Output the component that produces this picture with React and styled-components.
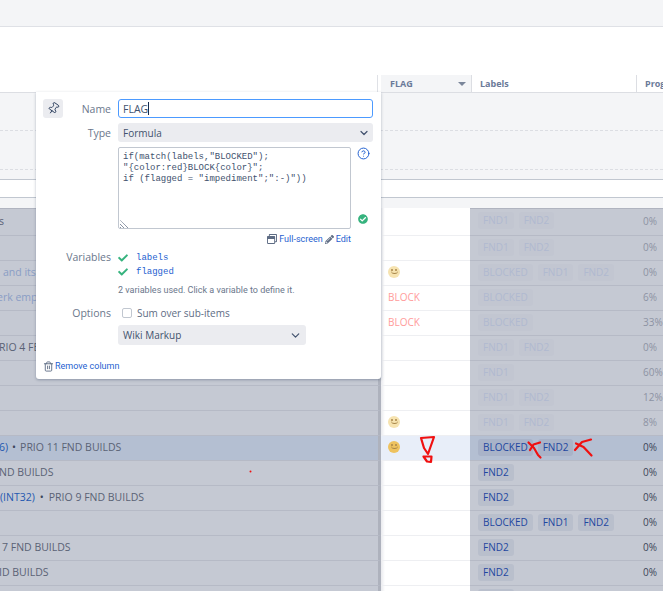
import React from "react";
import styled, { createGlobalStyle, css } from "styled-components";
import { ChevronDown, CircleHelp, Pin, Trash2 } from "lucide-react";
import { FaCheck, FaCheckCircle, FaPencilAlt, FaRegWindowRestore } from "react-icons/fa";

const rows = [
  { text: "s", shift: -1, labels: ["FND1", "FND2"], prog: "0%", faded: true },
  { labels: ["FND1", "FND2"], prog: "0%", faded: true },
  { link: "and its", shift: 3, smile: true, labels: ["BLOCKED", "FND1", "FND2"], prog: "0%", faded: true },
  { link: "erk empl", shift: -3, flag: "BLOCK", labels: ["BLOCKED"], prog: "6%", faded: true },
  { flag: "BLOCK", labels: ["BLOCKED"], prog: "33%", faded: true },
  { text: "RIO 4 FEA", shift: -1, labels: ["FND1", "FND2"], prog: "0%", faded: true },
  { labels: ["FND1"], prog: "60%", faded: true },
  { labels: ["FND1", "FND2"], prog: "12%", faded: true },
  { smile: true, labels: ["FND1", "FND2"], prog: "8%", faded: true },
  { link: "6)", after: "PRIO 11 FND BUILDS", shift: -1, smile: true, active: true, labels: ["BLOCKED", "FND2"], prog: "0%" },
  { text: "ND BUILDS", shift: -1, labels: ["FND2"], prog: "0%" },
  { link: "(INT32)", after: "PRIO 9 FND BUILDS", shift: 0, labels: ["FND2"], prog: "0%" },
  { labels: ["BLOCKED", "FND1", "FND2"], prog: "0%" },
  { text: "7 FND BUILDS", shift: 2, labels: ["FND2"], prog: "0%" },
  { text: "ID BUILDS", shift: -1, labels: ["FND2"], prog: "0%" },
  { labels: ["FND2"], prog: "0%" },
];

const App = () => {
  return (
    <Page>
      <GlobalStyle />
      <TopBar />
      <Gap />
      <HeaderRow>
        <HeaderSpacer />
        <FlagHeader>
          FLAG
          <SortArrow />
        </FlagHeader>
        <LabelsHeader>Labels</LabelsHeader>
        <ProgHeader>Progress</ProgHeader>
      </HeaderRow>
      <Band>
        <BandLine $h={37} />
        <BandLine $h={38} />
        <BandEnd />
      </Band>
      <WhiteStrip />
      <GreyStrip />

      <Grid>
        {rows.map((r, i) => (
          <Row key={i} $first={i === 0}>
            <LeftCell $active={r.active} $first={i === 0} $shift={r.shift || 0}>
              {r.text}
              {r.link && <IssueLink $faded={r.faded}>{r.link}</IssueLink>}
              {r.after && <Dot>•</Dot>}
              {r.after}
            </LeftCell>
            <FlagCell $active={r.active}>
              {r.smile && <Smile $faded={r.faded} />}
              {r.flag && <BlockText>{r.flag}</BlockText>}
            </FlagCell>
            <LabelsCell $active={r.active} $first={i === 0}>
              {r.labels.map((l, j) => (
                <Chip key={j} $faded={r.faded} $active={r.active}>
                  {l}
                </Chip>
              ))}
            </LabelsCell>
            <ProgCell $active={r.active} $first={i === 0} $faded={r.faded}>
              {r.prog}
            </ProgCell>
          </Row>
        ))}
      </Grid>

      <Popup>
        <Field $mb={5}>
          <FieldLabel>
            <PinButton>
              <Pin size={13} strokeWidth={1.6} />
            </PinButton>
            Name
          </FieldLabel>
          <NameInput>
            FLAG
            <Caret />
          </NameInput>
        </Field>
        <Field $mb={5}>
          <FieldLabel>Type</FieldLabel>
          <SelectBox>
            Formula
            <ChevronDown size={12} strokeWidth={2.4} />
          </SelectBox>
        </Field>
        <Field $mb={3}>
          <span />
          <FormulaWrap>
            <Formula>
              {'if(match(labels,"BLOCKED");\n"{color:red}BLOCK{color}";\nif (flagged = "impediment";":-)"))'}
              <ResizeHatch />
            </Formula>
            <SideIcons>
              <CircleHelp size={13} color="#1f5fd0" strokeWidth={1.8} />
              <FaCheckCircle size={10} color="#36b37e" />
            </SideIcons>
          </FormulaWrap>
        </Field>
        <Field $mb={4}>
          <span />
          <EditLinks>
            <FaRegWindowRestore size={10} color="#5e6c84" />
            <TextLink>Full-screen</TextLink>
            <FaPencilAlt size={9} color="#5e6c84" />
            <TextLink>Edit</TextLink>
          </EditLinks>
        </Field>
        <Field>
          <FieldLabel $h={14}>Variables</FieldLabel>
          <VarList>
            <VarRow>
              <FaCheck size={10} color="#36b37e" />
              <VarName>labels</VarName>
            </VarRow>
            <VarRow>
              <FaCheck size={10} color="#36b37e" />
              <VarName>flagged</VarName>
            </VarRow>
          </VarList>
        </Field>
        <Field $mb={6}>
          <span />
          <Hint>2 variables used. Click a variable to define it.</Hint>
        </Field>
        <Field $mb={3}>
          <FieldLabel>Options</FieldLabel>
          <CheckRow>
            <CheckBox />
            Sum over sub-items
          </CheckRow>
        </Field>
        <Field $mb={14}>
          <span />
          <MarkupSelect>
            Wiki Markup
            <ChevronDown size={13} strokeWidth={2.2} />
          </MarkupSelect>
        </Field>
        <RemoveRow>
          <Trash2 size={11} color="#5e6c84" />
          <TextLink>Remove column</TextLink>
        </RemoveRow>
      </Popup>

      <Scribble viewBox="0 0 663 591">
        <g fill="none" stroke="#f01010" strokeWidth="2.2" strokeLinecap="round" strokeLinejoin="round">
          <path d="M421 438 L434 437 L428 454 L424 448 Z" />
          <path d="M423.5 456.5 L431.5 456.5 L431 462 L427 461.5 Z" />
          <path d="M528.5 442.5 L534 448 L538 455 L540.5 457.5" />
          <path d="M540 442.5 L533.5 444.5 L530 450" />
          <path d="M576 443.5 L583.5 447 L591.5 455.5" />
          <path d="M591 439.5 L582 442 L575 450" />
        </g>
        <circle cx="250.5" cy="471.5" r="1" fill="#f01010" />
      </Scribble>
    </Page>
  );
};

export default App;

const GlobalStyle = createGlobalStyle`
  html, body {
    margin: 0;
    padding: 0;
    background: #fff;
    overflow: hidden;
  }
  body {
    font-family: "Open Sans", "Noto Sans", sans-serif;
    font-size: 11px;
  }
`;

const Page = styled.div`
  position: relative;
  width: 663px;
  height: 591px;
  overflow: hidden;
  background: #fff;
`;

const TopBar = styled.div`
  height: 26px;
  background: #f4f5f7;
  border-bottom: 1px solid #dfe1e6;
`;

const Gap = styled.div`
  height: 48px;
`;

const HeaderRow = styled.div`
  display: flex;
  height: 17px;
  border-bottom: 1px solid #dcdee3;
  font-weight: 700;
  font-size: 9px;
  line-height: 17px;
  color: #6b7a99;

  & > * {
    flex-shrink: 0;
  }
`;

const HeaderSpacer = styled.div`
  box-sizing: border-box;
  width: 378px;
  border-right: 1px solid #dfe1e6;
`;

const FlagHeader = styled.div`
  display: flex;
  align-items: center;
  justify-content: space-between;
  box-sizing: border-box;
  width: 94px;
  padding: 0 5px 0 9px;
  background: #f4f5f7;
  border-left: 3px solid #fff;
  border-right: 1px solid #dcdee3;
`;

const SortArrow = styled.span`
  width: 0;
  height: 0;
  border-left: 4px solid transparent;
  border-right: 4px solid transparent;
  border-top: 4px solid #7a869a;
`;

const LabelsHeader = styled.div`
  box-sizing: border-box;
  width: 165px;
  padding-left: 8px;
  border-right: 1px solid #dcdee3;
`;

const ProgHeader = styled.div`
  padding-left: 8px;
  white-space: nowrap;
`;

const Band = styled.div`
  background: #f4f5f7;
`;

const BandLine = styled.div`
  height: ${(p) => p.$h}px;
  border-bottom: 1px dashed #dcdee3;
`;

const BandEnd = styled.div`
  height: 9px;
  border-bottom: 1px solid #c1c7d0;
`;

const WhiteStrip = styled.div`
  height: 17px;
  border-bottom: 1px solid #c1c7d0;
`;

const GreyStrip = styled.div`
  height: 10px;
  background: #f4f5f7;
`;

const Grid = styled.div`
  display: flex;
  flex-direction: column;
`;

const Row = styled.div`
  display: flex;
  height: ${(p) => (p.$first ? 28 : 25)}px;
  align-items: stretch;
`;

const dimCell = css`
  background: ${(p) => (p.$active ? "#b4bfd2" : "#c5c9d3")};
  border-bottom: 1px solid #b6bac6;
  box-shadow: ${(p) => (p.$first ? "inset 0 1px 0 #b0b4c0" : "none")};
  padding-bottom: 2px;
`;

const LeftCell = styled.div`
  ${dimCell}
  box-sizing: border-box;
  width: 381px;
  display: flex;
  align-items: center;
  overflow: hidden;
  white-space: nowrap;
  padding-left: ${(p) => Math.max(p.$shift, 0)}px;
  text-indent: ${(p) => Math.min(p.$shift, 0)}px;
  border-right: 3px solid #aeb2bd;
  font-size: 10.5px;
  color: #5a6275;
`;

const IssueLink = styled.span`
  color: ${(p) => (p.$faded ? "#8a9dc5" : "#2458b0")};
`;

const Dot = styled.span`
  margin: 0 5px;
  color: #3c4559;
`;

const FlagCell = styled.div`
  box-sizing: border-box;
  width: 89px;
  display: flex;
  align-items: center;
  padding: 0 0 2px 7px;
  background: ${(p) =>
    p.$active
      ? "#e8eef9"
      : "linear-gradient(90deg, #e9eaee 0, #fff 4px)"};
  border-bottom: 1px solid #eeeff2;
`;

const Smile = styled.span`
  position: relative;
  display: block;
  width: 12px;
  height: 12px;
  border-radius: 50%;
  background: ${(p) => (p.$faded ? "#f6e3b0" : "#eec25f")};

  &::before {
    content: "";
    position: absolute;
    left: 3px;
    top: 3px;
    width: 2px;
    height: 2px;
    border-radius: 50%;
    background: #a8864a;
    box-shadow: 4px 0 0 #a8864a;
  }
  &::after {
    content: "";
    position: absolute;
    left: 2.5px;
    top: 4px;
    width: 7px;
    height: 4px;
    box-sizing: border-box;
    border-bottom: 1px solid #a8864a;
    border-radius: 0 0 5px 5px;
  }
`;

const BlockText = styled.span`
  font-size: 10px;
  color: #ff9c9c;
`;

const LabelsCell = styled.div`
  ${dimCell}
  box-sizing: border-box;
  width: 173px;
  display: flex;
  align-items: center;
  gap: 5px;
  padding-left: 8px;
`;

const Chip = styled.span`
  height: 17px;
  line-height: 17px;
  padding: 0 5px;
  border-radius: 3px;
  font-size: 10px;
  white-space: nowrap;
  background: ${(p) => (p.$active ? "#a9b3c8" : p.$faded ? "#c2c6d1" : "#b9bfcc")};
  color: ${(p) => (p.$faded ? "#b0b9d0" : "#1f47a0")};
`;

const ProgCell = styled.div`
  ${dimCell}
  flex: 1;
  display: flex;
  align-items: center;
  font-size: 10px;
  white-space: nowrap;
  color: ${(p) => (p.$faded ? "#8d93a3" : "#3c4559")};
`;

const Popup = styled.div`
  position: absolute;
  left: 36px;
  top: 92px;
  box-sizing: border-box;
  width: 345px;
  height: 287px;
  padding: 7px 8px 0 7px;
  background: #fff;
  border-radius: 0 0 3px 3px;
  box-shadow: 0 1px 3px rgba(9, 30, 66, 0.3);
`;

const Field = styled.div`
  display: grid;
  grid-template-columns: 68px 1fr;
  column-gap: 7px;
  margin-bottom: ${(p) => p.$mb || 0}px;
`;

const FieldLabel = styled.div`
  display: flex;
  justify-content: flex-end;
  align-items: center;
  height: ${(p) => p.$h || 19}px;
  font-size: 10.5px;
  color: #6b778c;
`;

const PinButton = styled.div`
  display: flex;
  align-items: center;
  justify-content: center;
  width: 20px;
  height: 19px;
  margin-right: auto;
  border-radius: 3px;
  background: #ebecf0;
  color: #253858;

  svg {
    transform: rotate(35deg);
  }
`;

const NameInput = styled.div`
  box-sizing: border-box;
  display: flex;
  align-items: center;
  height: 19px;
  padding-left: 4px;
  border: 1px solid #4c9aff;
  border-radius: 3px;
  font-size: 10.5px;
  color: #42526e;
`;

const Caret = styled.span`
  width: 1px;
  height: 13px;
  background: #172b4d;
`;

const SelectBox = styled.div`
  box-sizing: border-box;
  display: flex;
  align-items: center;
  justify-content: space-between;
  height: 19px;
  padding: 0 3px 0 5px;
  border-radius: 3px;
  background: #ebecf0;
  font-size: 10px;
  color: #42526e;
`;

const FormulaWrap = styled.div`
  display: flex;
`;

const Formula = styled.div`
  position: relative;
  box-sizing: border-box;
  width: 233px;
  height: 82px;
  padding: 4px 4px;
  border: 1px solid #c1c7d0;
  border-radius: 2px;
  font-family: "Liberation Mono", "DejaVu Sans Mono", monospace;
  font-size: 9px;
  line-height: 11px;
  white-space: pre;
  color: #42526e;
`;

const ResizeHatch = styled.span`
  position: absolute;
  left: 1px;
  bottom: 0;
  width: 9px;
  height: 8px;
  background: repeating-linear-gradient(45deg, #8993a4 0 1px, transparent 1px 2.5px);
  clip-path: polygon(0 0, 100% 100%, 0 100%);
`;

const SideIcons = styled.div`
  display: flex;
  flex-direction: column;
  justify-content: space-between;
  align-items: center;
  width: 24px;
  height: 82px;
  padding: 0 0 5px;
  box-sizing: border-box;
`;

const EditLinks = styled.div`
  box-sizing: border-box;
  width: 233px;
  height: 14px;
  display: flex;
  align-items: center;
  justify-content: flex-end;
  gap: 2px;
`;

const TextLink = styled.span`
  font-family: Roboto, "Open Sans", sans-serif;
  font-size: 9px;
  color: #1f5fd0;
  white-space: nowrap;
`;

const VarList = styled.div`
  display: flex;
  flex-direction: column;
  padding-top: 1px;
  margin-bottom: 4px;
`;

const VarRow = styled.div`
  display: flex;
  align-items: center;
  height: 14px;
  gap: 8px;
`;

const VarName = styled.span`
  font-family: "Liberation Mono", "DejaVu Sans Mono", monospace;
  font-size: 9px;
  color: #1f5fd0;
`;

const Hint = styled.div`
  height: 14px;
  line-height: 14px;
  font-family: Roboto, "Open Sans", sans-serif;
  font-size: 9px;
  color: #6b778c;
  white-space: nowrap;
`;

const CheckRow = styled.div`
  display: flex;
  align-items: center;
  height: 19px;
  padding-left: 4px;
  gap: 5px;
  font-size: 10px;
  color: #5e6c84;
`;

const CheckBox = styled.span`
  box-sizing: border-box;
  width: 10px;
  height: 10px;
  border: 1px solid #c1c7d0;
  border-radius: 2px;
`;

const MarkupSelect = styled(SelectBox)`
  width: 188px;
  height: 20px;
  padding-right: 4px;
`;

const RemoveRow = styled.div`
  display: flex;
  align-items: center;
  gap: 1px;
  height: 14px;
`;

const Scribble = styled.svg`
  position: absolute;
  left: 0;
  top: 0;
  width: 663px;
  height: 591px;
  pointer-events: none;
`;
